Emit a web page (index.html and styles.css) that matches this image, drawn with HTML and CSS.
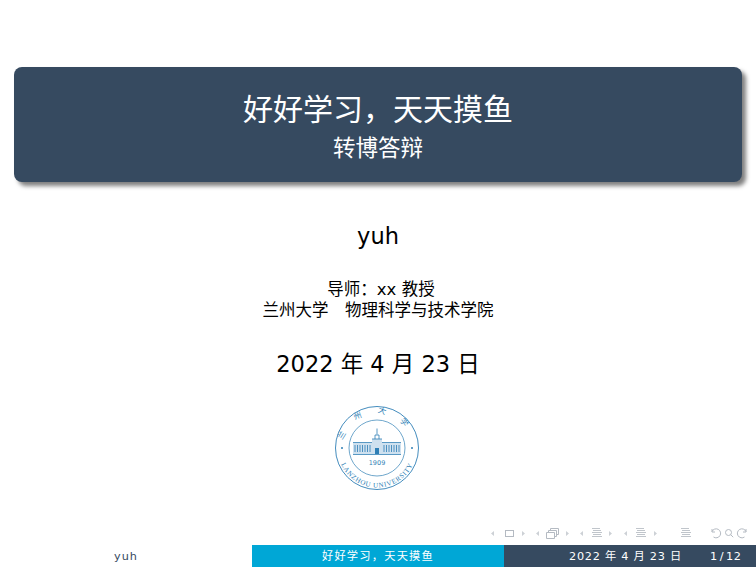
FILE: index.html
```html
<!DOCTYPE html>
<html lang="zh">
<head>
<meta charset="utf-8">
<title>好好学习&#xFF0C;天天摸鱼</title>
<link rel="stylesheet" href="styles.css">
</head>
<body>
<div class="slide">
  <main class="content">
    <header class="title-box">
      <div class="title">好好学习&#xFF0C;天天摸鱼</div>
      <div class="subtitle">转博答辩</div>
    </header>
    <div class="author">yuh</div>
    <div class="institute">
      <div class="advisor">导师&#xFF1A;xx 教授</div>
      <div>兰州大学&emsp;物理科学与技术学院</div>
    </div>
    <div class="date">2022 年 4 月 23 日</div>
    <svg class="seal" width="86" height="86" viewBox="0 0 86 86">
      <defs>
        <path id="arc-top" d="M9 43a34 34 0 0 1 68 0"/>
        <path id="arc-bottom" d="M3.500 43a39.500 39.500 0 0 0 79 0"/>
      </defs>
      <circle class="seal-ring" cx="43" cy="43" r="41.500"/>
      <circle class="seal-ring-thin" cx="43" cy="43" r="28"/>
      <circle class="seal-ink" cx="8" cy="43" r="1"/>
      <circle class="seal-ink" cx="78" cy="43" r="1"/>
      <path class="seal-wall" d="M19 38h19v11H19zM48 38h19v11H48zM38 34h10v15H38z"/>
      <path class="seal-roof" d="M19 37.500h19M48 37.500h19M38 34h10M43 23.500v6M41 34v-4h4v4M19 49.500h48"/>
      <path class="seal-win" d="M21 40v7M23.500 40v7M26 40v7M28.500 40v7M31 40v7M33.500 40v7M36 40v7M50 40v7M52.500 40v7M55 40v7M57.500 40v7M60 40v7M62.500 40v7M65 40v7"/>
      <path class="seal-ink" d="M41 43h4v6h-4z"/>
      <text class="seal-cn"><textPath href="#arc-top" startOffset="50%">兰州大学</textPath></text>
      <text class="seal-en"><textPath href="#arc-bottom" startOffset="50%">LANZHOU UNIVERSITY</textPath></text>
      <text class="seal-year" x="43" y="60">1909</text>
    </svg>
  </main>
  <nav class="nav-icons" aria-label="导航">
    <svg width="270" height="20" viewBox="0 0 270 20">
      <path class="nav-fill" d="M5 8.500l3-2.500v5zM36 6l3 2.500-3 2.500zM50 8.500l3-2.500v5zM80 6l3 2.500-3 2.500zM94 8.500l3-2.500v5zM123 6l3 2.500-3 2.500zM138 8.500l3-2.500v5zM168 6l3 2.500-3 2.500z"/>
      <g class="nav-stroke">
        <rect x="19.500" y="5.500" width="8" height="6"/>
        <path d="M60.500 7.500h8v6h-8zM62.500 7.500v-2h8v6h-2M64.500 5.500v-2h8v6h-2"/>
      </g>
      <path class="nav-list" d="M106 3.500h8M107 5.500h8M106 7.500h10M107 9.500h8M106 11.500h10M150 3.500h8M151 5.500h8M150 7.500h10M151 9.500h8M150 11.500h10M195 3.500h8M196 5.500h8M195 7.500h10M196 9.500h8M195 11.500h10"/>
      <g class="nav-stroke">
        <path d="M226 6.500a4.500 4.500 0 1 1 1.500 5.500M226 4v3h3"/>
        <circle cx="242.500" cy="7.500" r="3"/>
        <path d="M244.700 9.700l2.500 2.500"/>
        <path d="M260 6.500a4.500 4.500 0 1 0-1.500 5.500M260 4v3h-3"/>
      </g>
    </svg>
  </nav>
  <footer class="footer">
    <div class="foot-cell foot-author">yuh</div>
    <div class="foot-cell foot-title">好好学习&#xFF0C;天天摸鱼</div>
    <div class="foot-cell foot-date">
      <span class="foot-date-text">2022 年 4 月 23 日</span>
      <span class="foot-page">1 / 12</span>
    </div>
  </footer>
</div>
</body>
</html>
```
FILE: styles.css
```css
* { box-sizing: border-box; }
html, body { margin: 0; padding: 0; background: #fff; }
body {
  font-family: "DejaVu Sans", "Noto Sans CJK SC", sans-serif;
  color: #000;
}
.slide {
  width: 756px;
  height: 567px;
  display: flex;
  flex-direction: column;
  overflow: hidden;
}
.content {
  flex: 1;
  min-height: 0;
  display: flex;
  flex-direction: column;
  align-items: center;
  padding: 67px 14px 0;
  text-align: center;
}
.title-box {
  width: 728px;
  height: 115px;
  padding-top: 23px;
  background: #364a60;
  color: #fff;
  border-radius: 8px;
  box-shadow: 4px 4px 4px rgba(0, 0, 0, .5);
}
.title { font-size: 30px; line-height: 40px; }
.subtitle { font-size: 22.500px; line-height: 36px; }
.author { margin-top: 39px; font-size: 22.500px; line-height: 30px; }
.institute { margin-top: 28px; font-size: 16.500px; line-height: 21px; }
.advisor { padding-left: 6px; }
.date { margin-top: 28px; font-size: 22.500px; line-height: 30px; }
.seal { margin: 26px 2px 0 0; display: block; flex: none; }
.seal-ring, .seal-ring-thin { fill: none; stroke: #2f7fb5; }
.seal-ring { stroke-width: .9; }
.seal-ring-thin { stroke-width: .7; }
.seal-ink { fill: #2f7fb5; }
.seal-wall { fill: #cfe1ef; }
.seal-roof { fill: none; stroke: #2f7fb5; stroke-width: .8; }
.seal-win { fill: none; stroke: #4c90c0; stroke-width: 1; }
.seal-cn { font-size: 8px; fill: #2f7fb5; text-anchor: middle; letter-spacing: 15px; font-family: "Noto Sans CJK SC", sans-serif; }
.seal-en { font-size: 7px; fill: #2f7fb5; text-anchor: middle; letter-spacing: .7px; font-family: "Liberation Serif", serif; }
.seal-year { font-size: 6.500px; fill: #2f7fb5; text-anchor: middle; }
.nav-icons { display: flex; justify-content: flex-end; height: 20px; flex: none; }
.nav-icons svg { display: block; }
.nav-fill { fill: #cdd1d6; }
.nav-stroke { fill: none; stroke: #b4bac2; stroke-width: 1; }
.nav-list { fill: none; stroke: #c0c5cb; stroke-width: 1; }
.footer { display: grid; grid-template-columns: 252px 252px 252px; height: 22px; flex: none; font-size: 11.250px; letter-spacing: 1px; line-height: 22px; }
.foot-cell { text-align: center; padding-top: 1px; white-space: nowrap; }
.foot-author { color: #364a60; background: #fff; }
.foot-title { color: #fff; background: #00a7d6; letter-spacing: 1.200px; }
.foot-date { display: flex; color: #fff; background: #364a60; letter-spacing: .750px; }
.foot-date-text { margin-left: 65px; width: 112px; }
.foot-page { margin-left: 29px; word-spacing: -2px; letter-spacing: .500px; }
```
